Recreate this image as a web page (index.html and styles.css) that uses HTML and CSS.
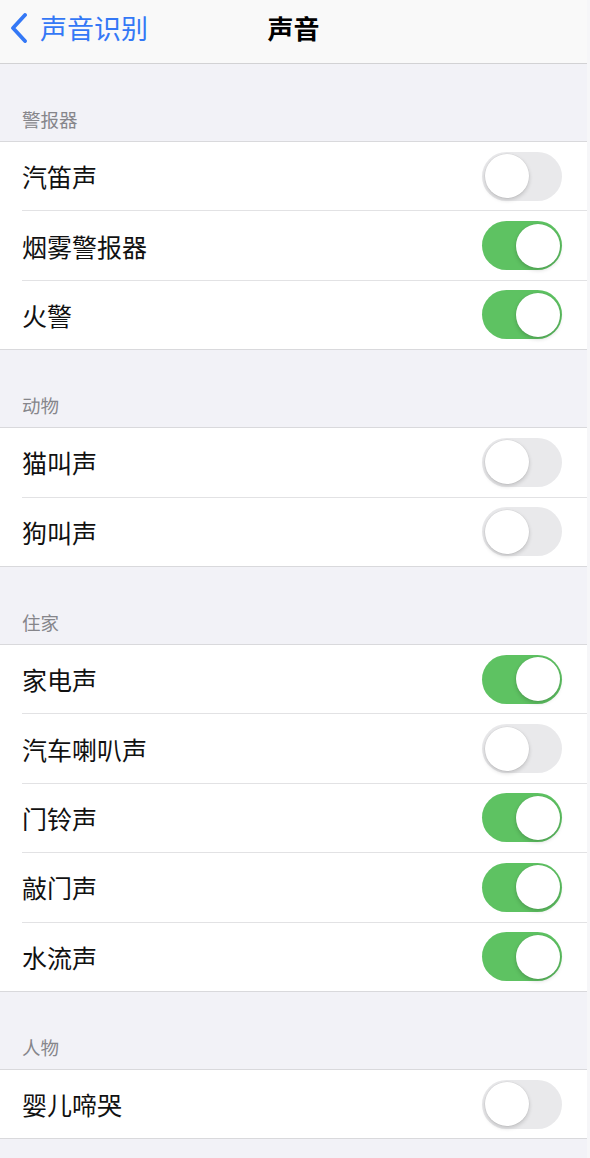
FILE: index.html
```html
<!DOCTYPE html>
<html lang="zh-CN">
<head>
    <meta charset="UTF-8">
    <meta name="viewport" content="width=device-width, initial-scale=1.0">
    <title>声音</title>
    <link rel="stylesheet" href="styles.css">
</head>
<body>
    <div class="page">
        <header class="navbar">
            <a class="back" href="#">
                <svg class="chevron" width="20" height="30" viewBox="0 0 20 30">
                    <path d="M16 2 L4 15 L16 28" fill="none" stroke="#3478f6" stroke-width="3.8" stroke-linecap="round" stroke-linejoin="round"/>
                </svg>
                <span>声音识别</span>
            </a>
            <h1 class="title">声音</h1>
        </header>

        <section class="group">
            <div class="group-header">警报器</div>
            <ul class="list">
                <li class="row"><span class="label">汽笛声</span><span class="toggle"></span></li>
                <li class="row"><span class="label">烟雾警报器</span><span class="toggle on"></span></li>
                <li class="row"><span class="label">火警</span><span class="toggle on"></span></li>
            </ul>
        </section>

        <section class="group">
            <div class="group-header">动物</div>
            <ul class="list">
                <li class="row"><span class="label">猫叫声</span><span class="toggle"></span></li>
                <li class="row"><span class="label">狗叫声</span><span class="toggle"></span></li>
            </ul>
        </section>

        <section class="group">
            <div class="group-header">住家</div>
            <ul class="list">
                <li class="row"><span class="label">家电声</span><span class="toggle on"></span></li>
                <li class="row"><span class="label">汽车喇叭声</span><span class="toggle"></span></li>
                <li class="row"><span class="label">门铃声</span><span class="toggle on"></span></li>
                <li class="row"><span class="label">敲门声</span><span class="toggle on"></span></li>
                <li class="row"><span class="label">水流声</span><span class="toggle on"></span></li>
            </ul>
        </section>

        <section class="group">
            <div class="group-header">人物</div>
            <ul class="list">
                <li class="row"><span class="label">婴儿啼哭</span><span class="toggle"></span></li>
            </ul>
        </section>
    </div>
</body>
</html>
```

FILE: styles.css
```css
html, body {
    margin: 0;
    padding: 0;
}
body {
    background-color: #f6f6f8;
    font-family: "Noto Sans CJK SC", "Noto Sans", sans-serif;
    width: 590px;
    height: 1158px;
    overflow: hidden;
}
.page {
    width: 587px;
    min-height: 1158px;
    background-color: #f2f2f7;
}
.navbar {
    height: 64px;
    box-sizing: border-box;
    padding-bottom: 8px;
    background-color: #f9f9f9;
    border-bottom: 1px solid #d2d2d4;
    display: flex;
    align-items: center;
    justify-content: center;
    position: relative;
}
.back {
    position: absolute;
    left: 9px;
    top: 0;
    height: 55px;
    display: flex;
    align-items: center;
    gap: 11px;
    color: #3478f6;
    text-decoration: none;
    font-size: 27px;
}
.title {
    margin: 0;
    font-size: 26px;
    font-weight: 700;
    color: #000;
}
.group {
    padding-top: 39px;
}
.group-header {
    font-size: 18.5px;
    color: #86868b;
    padding-left: 22px;
    height: 38px;
    line-height: 32px;
}
.list {
    list-style: none;
    margin: 0;
    padding: 0 0 0 22px;
    background-color: #fff;
    border-top: 1px solid #d9d9dc;
    border-bottom: 1px solid #d9d9dc;
}
.row {
    height: 68.4px;
    display: flex;
    align-items: center;
    justify-content: space-between;
    padding-right: 25px;
    border-bottom: 1px solid #e2e2e4;
}
.row:last-child {
    border-bottom: none;
}
.label {
    font-size: 25px;
    color: #111;
}
.toggle {
    width: 80px;
    height: 49px;
    border-radius: 25px;
    background-color: #e9e9eb;
    position: relative;
    flex-shrink: 0;
}
.toggle::after {
    content: "";
    position: absolute;
    top: 2.5px;
    left: 2.5px;
    width: 44px;
    height: 44px;
    border-radius: 50%;
    background-color: #fff;
    box-shadow: 0 2px 4px rgba(0, 0, 0, 0.18), 0 0 0 0.5px rgba(0, 0, 0, 0.06);
}
.toggle.on {
    background-color: #5ec262;
}
.toggle.on::after {
    left: auto;
    right: 2.5px;
}
```
